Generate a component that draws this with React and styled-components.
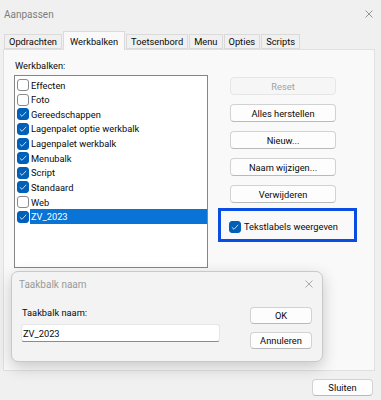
import React from 'react';
import styled, { createGlobalStyle } from 'styled-components';

const GlobalStyle = createGlobalStyle`
  html, body {
    margin: 0;
    padding: 0;
  }
  body {
    background: #f0f0f0;
    font-family: Roboto, "Liberation Sans", Arial, sans-serif;
    font-size: 9.3px;
    color: #0a0a0a;
  }
  * { box-sizing: border-box; }
`

const Window = styled.div`
  position: relative;
  width: 381px;
  height: 400px;
  display: flex;
  flex-direction: column;
  overflow: hidden;
  background: #f0f0f0;
`
const TitleBar = styled.div`
  height: 28px;
  display: flex;
  align-items: center;
  justify-content: space-between;
  padding: 0 8px 0 4px;
  color: #7d7d7d;
  font-size: 10px;
`
const TabRow = styled.div`
  position: relative;
  z-index: 1;
  margin-top: 3px;
  height: 18px;
  display: flex;
  align-items: flex-end;
  padding-left: 4px;
`
const Tab = styled.div`
  height: ${p => (p.$active ? '19px' : '15px')};
  margin-bottom: ${p => (p.$active ? '-1px' : '0')};
  margin-right: 1px;
  padding: 0 ${p => (p.$active ? '6px' : '4px')};
  display: flex;
  align-items: center;
  border: 1px solid #dadada;
  border-bottom: ${p => (p.$active ? 'none' : '1px solid #dadada')};
  background: ${p => (p.$active ? '#f9f9f9' : '#f0f0f0')};
`
const Panel = styled.div`
  margin-left: 3px;
  width: 372px;
  height: 322px;
  border: 1px solid #e0e0e0;
  background: #f9f9f9;
  padding: 10px 0 0 10px;
  display: grid;
  grid-template-columns: 194px 139px;
  column-gap: 10px;
  align-items: start;
`
const LeftCol = styled.div`
  display: flex;
  flex-direction: column;
`
const Label = styled.div`
  line-height: 12px;
  padding-left: 1px;
`
const ListBox = styled.div`
  margin-top: 3px;
  height: 193px;
  border: 1px solid #858585;
  background: #ffffff;
  padding: 1.7px 0 0 0;
`
const Row = styled.div`
  height: 14.63px;
  display: flex;
  align-items: center;
  padding-left: 2px;
`
const RowText = styled.span`
  flex: 1;
  height: 100%;
  display: flex;
  align-items: center;
  margin-left: 1px;
  padding-left: 1px;
  background: ${p => (p.$selected ? '#0a74d6' : 'transparent')};
  color: ${p => (p.$selected ? '#ffffff' : 'inherit')};
`
const Box = styled.span`
  width: 12px;
  height: 12px;
  flex: none;
  border-radius: 3px;
  border: 1px solid ${p => (p.$checked ? '#005fb8' : '#8a8a8a')};
  background: ${p => (p.$checked ? '#005fb8' : '#ffffff')};
  display: flex;
  align-items: center;
  justify-content: center;
`
const RightCol = styled.div`
  padding-top: 17px;
  display: flex;
  flex-direction: column;
`
const Button = styled.div`
  width: ${p => p.$w || 106}px;
  height: ${p => p.$h || 18}px;
  margin-left: ${p => p.$ml || 0}px;
  margin-bottom: ${p => p.$mb || 0}px;
  display: flex;
  align-items: center;
  justify-content: center;
  border-radius: 4px;
  border: 1px solid ${p => (p.$disabled ? '#e6e6e6' : '#d2d2d2')};
  border-bottom-color: ${p => (p.$disabled ? '#e6e6e6' : '#b9b9b9')};
  background: ${p => (p.$disabled ? '#f6f6f6' : '#fdfdfd')};
  color: ${p => (p.$disabled ? '#a3a3a3' : '#0a0a0a')};
`
const Highlight = styled.div`
  margin-top: 5px;
  height: 34px;
  border: 3px solid #0a4de2;
  display: flex;
  align-items: center;
  padding: 3px 0 0 8px;
  gap: 3px;
`
const Footer = styled.div`
  flex: 1;
  display: flex;
  justify-content: flex-end;
  align-items: flex-start;
  padding: 8px 8px 0 0;
`
const Dialog = styled.div`
  position: absolute;
  left: 11px;
  top: 271px;
  width: 312px;
  height: 91px;
  border: 1px solid #c9c9c9;
  border-radius: 7px;
  background: #f3f3f3;
  box-shadow: 0 5px 16px rgba(0, 0, 0, 0.2);
  display: flex;
  flex-direction: column;
`
const DialogTitle = styled.div`
  height: 24px;
  display: flex;
  align-items: center;
  justify-content: space-between;
  padding: 0 9px 0 7px;
  color: #9a9a9a;
  font-size: 10px;
`
const DialogBody = styled.div`
  display: flex;
  padding-left: 9px;
  gap: 30px;
`
const Field = styled.div`
  width: 199px;
  display: flex;
  flex-direction: column;
  padding-top: 11px;
`
const Input = styled.div`
  margin-top: 5px;
  height: 18px;
  background: #ffffff;
  border: 1px solid #e6e6e6;
  border-bottom-color: #8a8a8a;
  border-radius: 3px;
  display: flex;
  align-items: center;
  padding-left: 1px;
`
const DialogButtons = styled.div`
  padding-top: 11px;
  display: flex;
  flex-direction: column;
  gap: 7.5px;
`

const Close = ({ color }) => (
  <svg width="8" height="8" viewBox="0 0 8 8">
    <path d="M0.5 0.5 L7.5 7.5 M7.5 0.5 L0.5 7.5" stroke={color} strokeWidth="0.9" fill="none" />
  </svg>
)

const Check = ({ checked }) => (
  <Box $checked={checked}>
    {checked && (
      <svg width="10" height="10" viewBox="0 0 10 10">
        <polyline points="1.8,5.2 4,7.3 8.2,2.8" stroke="#dfe9f5" strokeWidth="0.9" fill="none" />
      </svg>
    )}
  </Box>
)

const tabs = ['Opdrachten', 'Werkbalken', 'Toetsenbord', 'Menu', 'Opties', 'Scripts']

const toolbars = [
  { name: 'Effecten', on: false },
  { name: 'Foto', on: false },
  { name: 'Gereedschappen', on: true },
  { name: 'Lagenpalet optie werkbalk', on: true },
  { name: 'Lagenpalet werkbalk', on: true },
  { name: 'Menubalk', on: true },
  { name: 'Script', on: true },
  { name: 'Standaard', on: true },
  { name: 'Web', on: false },
  { name: 'ZV_2023', on: true, selected: true },
]

export default function App() {
  return (
    <>
      <GlobalStyle />
      <Window>
        <TitleBar>
          <span>Aanpassen</span>
          <Close color="#8a8a8a" />
        </TitleBar>
        <TabRow>
          {tabs.map(t => (
            <Tab key={t} $active={t === 'Werkbalken'}>{t}</Tab>
          ))}
        </TabRow>
        <Panel>
          <LeftCol>
            <Label>Werkbalken:</Label>
            <ListBox>
              {toolbars.map(tb => (
                <Row key={tb.name}>
                  <Check checked={tb.on} />
                  <RowText $selected={tb.selected}>{tb.name}</RowText>
                </Row>
              ))}
            </ListBox>
          </LeftCol>
          <RightCol>
            <Button $ml={12} $mb={9} $disabled>Reset</Button>
            <Button $ml={12} $mb={9}>Alles herstellen</Button>
            <Button $ml={12} $mb={9}>Nieuw...</Button>
            <Button $ml={12} $mb={9}>Naam wijzigen...</Button>
            <Button $ml={12}>Verwijderen</Button>
            <Highlight>
              <Check checked />
              <span>Tekstlabels weergeven</span>
            </Highlight>
          </RightCol>
        </Panel>
        <Footer>
          <Button $w={61} $h={17}>Sluiten</Button>
        </Footer>
        <Dialog>
          <DialogTitle>
            <span>Taakbalk naam</span>
            <Close color="#a0a0a0" />
          </DialogTitle>
          <DialogBody>
            <Field>
              <Label>Taakbalk naam:</Label>
              <Input>ZV_2023</Input>
            </Field>
            <DialogButtons>
              <Button $w={62} $h={17}>OK</Button>
              <Button $w={62} $h={17}>Annuleren</Button>
            </DialogButtons>
          </DialogBody>
        </Dialog>
      </Window>
    </>
  )
}
